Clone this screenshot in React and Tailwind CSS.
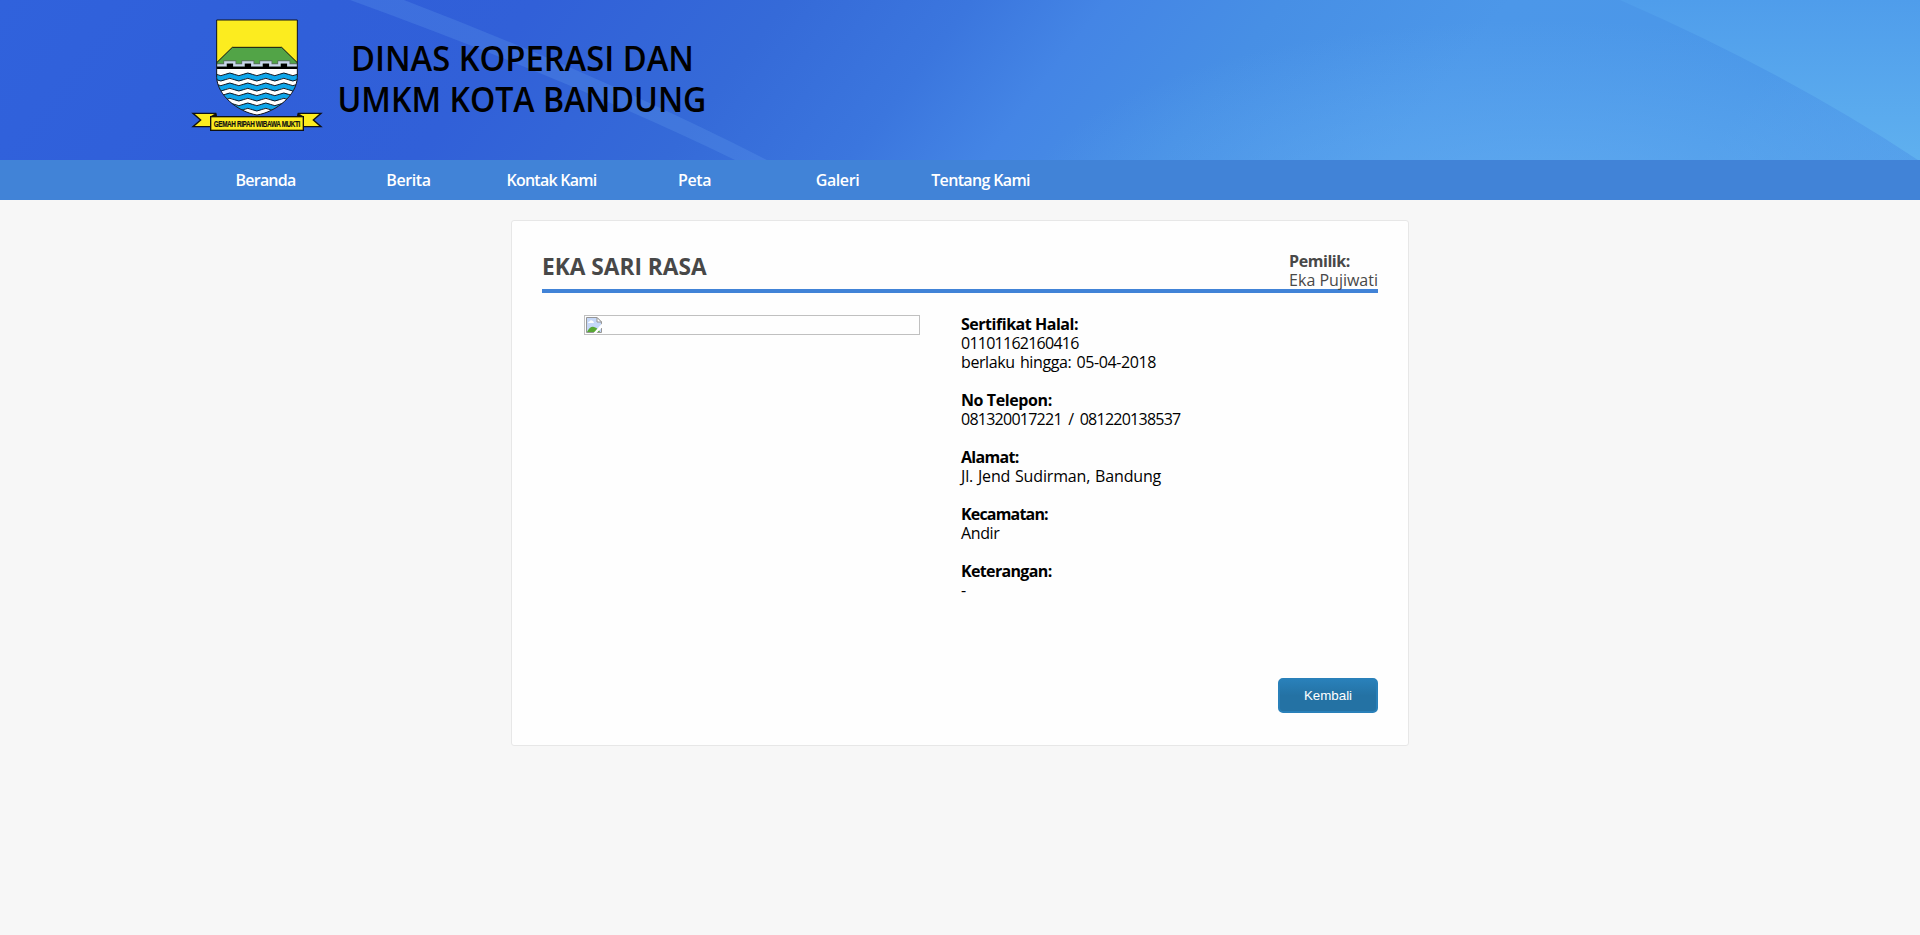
const NAV = [
  { label: "Beranda", cls: "tracking-[-0.8px]" },
  { label: "Berita", cls: "tracking-[-0.4px]" },
  { label: "Kontak Kami", cls: "tracking-[-0.75px]" },
  { label: "Peta", cls: "tracking-[-0.4px]" },
  { label: "Galeri", cls: "tracking-[-0.4px]" },
  { label: "Tentang Kami", cls: "tracking-[-0.65px]" },
];

const DETAILS = [
  {
    title: "Sertifikat Halal:",
    cls: "tracking-[-0.47px]",
    lines: [
      { text: "01101162160416", cls: "tracking-[-0.75px]" },
      { text: "berlaku hingga: 05-04-2018", cls: "tracking-[-0.4px] [word-spacing:1.5px]" },
    ],
  },
  {
    title: "No Telepon:",
    cls: "tracking-[-0.4px]",
    lines: [{ text: "081320017221 / 081220138537", cls: "tracking-[-0.75px] [word-spacing:3px]" }],
  },
  {
    title: "Alamat:",
    cls: "tracking-[-0.7px]",
    lines: [{ text: "Jl. Jend Sudirman, Bandung", cls: "tracking-[-0.15px] [word-spacing:0.8px]" }],
  },
  { title: "Kecamatan:", cls: "tracking-[-0.82px]", lines: [{ text: "Andir", cls: "tracking-[-0.4px]" }] },
  { title: "Keterangan:", cls: "tracking-[-0.65px]", lines: [{ text: "-", cls: "" }] },
];

const WAVE_LEFT = 82;
const WAVE_HALF = 27;
const WAVE_COUNT = 11;

function band(y, thickness) {
  let d = `M${WAVE_LEFT} ${y}`;
  for (let i = 0; i < WAVE_COUNT; i++) d += `q13.5 ${i % 2 ? 8 : -8} ${WAVE_HALF} 0`;
  d += `v${thickness}`;
  for (let i = 0; i < WAVE_COUNT; i++) d += `q-13.5 ${i % 2 ? 8 : -8} ${-WAVE_HALF} 0`;
  return `${d}Z`;
}

function Crest() {
  return (
    <svg className="h-[114px] w-[130px] shrink-0 overflow-visible" viewBox="36 54 390 342">
      <defs>
        <clipPath id="shield">
          <path d="M110 60H352V232C350 285 290 335 231 345C172 335 112 285 110 232Z" />
        </clipPath>
      </defs>
      <g clipPath="url(#shield)">
        <rect x="108" y="58" width="246" height="290" fill="#fff" />
        <rect x="108" y="58" width="246" height="134" fill="#fcec1f" />
        <path d="M108 190L157 142H305L354 190V200H108Z" fill="#52a447" stroke="#111" strokeWidth="3" />
        <path
          d="M108 196H136V187H163V196H190V187H217V196H244V187H271V196H298V187H325V196H354"
          fill="none"
          stroke="#58705c"
          strokeWidth="12"
        />
        <path
          d="M108 196H136V187H163V196H190V187H217V196H244V187H271V196H298V187H325V196H354"
          fill="none"
          stroke="#c9d5ec"
          strokeWidth="7"
        />
        <path d="M108 200H141V191H159V200H195V191H213V200H249V191H267V200H303V191H321V200H354V207H108Z" fill="#000" />
        {[223, 253, 283, 313].map((y) => (
          <path key={y} d={band(y, 16)} fill="#0fa5e9" stroke="#0a0a14" strokeWidth="2.8" />
        ))}
      </g>
      <path d="M110 60H352V232C350 285 290 335 231 345C172 335 112 285 110 232Z" fill="none" stroke="#10131c" strokeWidth="3" />
      <path d="M39 340H107L110 352L92 380H39L62 360Z" fill="#fcec1f" stroke="#111" strokeWidth="4" />
      <path d="M423 340H355L352 352L370 380H423L400 360Z" fill="#fcec1f" stroke="#111" strokeWidth="4" />
      <path d="M92 350L108 340V350M370 350L354 340V350" fill="#111" stroke="#111" strokeWidth="2" />
      <rect x="92" y="350" width="278" height="41" fill="#fcec1f" stroke="#111" strokeWidth="4" />
      <text
        transform="translate(231 381) scale(0.68 1)"
        textAnchor="middle"
        textLength="382"
        fontFamily="Liberation Sans, Arial, sans-serif"
        fontWeight="700"
        fontSize="28"
        fill="#111"
        stroke="#111"
        strokeWidth="0.6"
      >
        GEMAH RIPAH WIBAWA MUKTI
      </text>
    </svg>
  );
}

function HeaderArt() {
  return (
    <svg className="absolute inset-0 h-full w-full" viewBox="0 0 1920 160" preserveAspectRatio="none">
      <defs>
        <linearGradient id="sky" gradientUnits="userSpaceOnUse" x1="0" y1="0" x2="1300" y2="1000">
          <stop offset="0" stopColor="#3062dc" />
          <stop offset="0.16" stopColor="#305fd9" />
          <stop offset="0.26" stopColor="#3160d8" />
          <stop offset="0.38" stopColor="#356ad8" />
          <stop offset="0.47" stopColor="#3b76de" />
          <stop offset="0.535" stopColor="#4485e5" />
          <stop offset="0.62" stopColor="#478fe5" />
          <stop offset="0.73" stopColor="#4c97e9" />
          <stop offset="0.88" stopColor="#4a97e8" />
          <stop offset="1" stopColor="#539fea" />
        </linearGradient>
        <radialGradient id="glow" gradientUnits="userSpaceOnUse" cx="0" cy="0" r="1" gradientTransform="translate(1540 210) scale(520 190)">
          <stop offset="0" stopColor="#66b0f2" stopOpacity="0.75" />
          <stop offset="1" stopColor="#66b0f2" stopOpacity="0" />
        </radialGradient>
        <linearGradient id="edge" x1="0" y1="0" x2="0" y2="1">
          <stop offset="0" stopColor="#4f9deb" />
          <stop offset="1" stopColor="#5fb0ef" />
        </linearGradient>
      </defs>
      <rect width="1920" height="160" fill="url(#sky)" />
      <rect width="1920" height="160" fill="url(#glow)" />
      <path d="M1620 0Q1785 72 1918 160H1920V0Z" fill="url(#edge)" />
      <path d="M350 0H404Q600 75 767 160H735Q570 80 350 0Z" fill="#6fa8f0" fillOpacity="0.22" />
    </svg>
  );
}

function BrokenImage() {
  return (
    <div className="ml-[42px] h-5 w-[336px] shrink-0 border border-[#c0c0c0] p-px">
      <svg className="block h-4 w-4" viewBox="0 0 16 16">
        <path d="M0.5 0.5H11L15.5 5V15.5H0.5Z" fill="#c6d8f8" stroke="#969696" />
        <path d="M2 6Q2 4.5 3.5 4.5Q4.5 2.5 6 3.5Q7.5 3.5 8 6Z" fill="#fff" />
        <path d="M1 15Q4 9 8 10Q12 11 14 15Z" fill="#58a832" />
        <path d="M11 0.5V5H15.5Z" fill="#fff" stroke="#969696" />
        <path d="M16 6.5V10.5L10.5 16H7.5Z" fill="#fff" />
      </svg>
    </div>
  );
}

export default function App() {
  return (
    <div className="min-h-[935px] bg-[#f7f7f7] font-['Open_Sans',sans-serif] text-base leading-[19px] text-black">
      <header className="relative h-40 overflow-hidden">
        <HeaderArt />
        <div className="relative flex pt-[18px] pl-48">
          <Crest />
          <h1 className="mt-[19px] flex w-[400px] flex-col items-center text-[35px] leading-[41px] font-semibold whitespace-nowrap">
            <span className="scale-x-[0.935]">DINAS KOPERASI DAN</span>
            <span className="scale-x-[0.918]">UMKM KOTA BANDUNG</span>
          </h1>
        </div>
      </header>

      <nav className="flex h-10 bg-[#4183d7] pl-[194px]">
        {NAV.map((n) => (
          <a key={n.label} className={`w-[143px] text-center leading-[41px] font-semibold whitespace-nowrap text-white ${n.cls}`}>
            {n.label}
          </a>
        ))}
      </nav>

      <main className="mt-5 ml-[511px] h-[526px] w-[898px] rounded-[3px] border border-[#e7e7e7] bg-[#fefefe] px-[30px] pt-[30px]">
        <div className="flex h-[42px] items-start justify-between border-b-4 border-[#4183d7] text-[#484848]">
          <h2 className="origin-left scale-x-[0.945] pt-[5px] text-2xl leading-[19px] font-bold whitespace-nowrap">EKA SARI RASA</h2>
          <div className="pt-px whitespace-nowrap">
            <div className="font-bold tracking-[-0.45px]">Pemilik:</div>
            <div>Eka Pujiwati</div>
          </div>
        </div>

        <div className="mt-[22px] flex">
          <BrokenImage />
          <dl className="ml-[41px] flex flex-col gap-[19px] whitespace-nowrap">
            {DETAILS.map((d) => (
              <div key={d.title}>
                <dt className={`font-bold ${d.cls}`}>{d.title}</dt>
                {d.lines.map((l) => (
                  <dd key={l.text} className={l.cls}>
                    {l.text}
                  </dd>
                ))}
              </div>
            ))}
          </dl>
        </div>

        <div className="mt-[78px] flex justify-end">
          <button className="h-[35px] w-[100px] rounded-[5px] border-2 border-[#2980b9] bg-linear-to-b from-[#2980b9] to-[#2472a4] to-50% font-['Liberation_Sans',Arial,sans-serif] text-[13.33px] text-white">
            Kembali
          </button>
        </div>
      </main>
    </div>
  );
}
